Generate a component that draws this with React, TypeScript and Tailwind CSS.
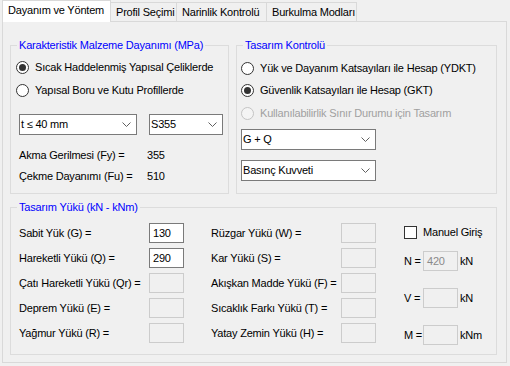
import React from 'react';

const Radio: React.FC<{ label: string; checked?: boolean; disabled?: boolean; className?: string }> = ({ label, checked, disabled, className = '' }) => (
  <div className={`flex items-center gap-[6px] h-[17px] ${className}`}>
    <span
      className={`w-[13px] h-[13px] rounded-full border flex items-center justify-center shrink-0 ${
        disabled ? 'border-[#c4c4c4] bg-[#f4f4f4]' : 'border-[#333333] bg-white'
      }`}
    >
      {checked && <span className="w-[7px] h-[7px] rounded-full bg-[#333333]" />}
    </span>
    <span className={disabled ? 'text-[#a0a0a0]' : ''}>{label}</span>
  </div>
);

const Chevron = () => (
  <svg width="9" height="5" viewBox="0 0 9 5" className="shrink-0">
    <polyline points="0.5,0.5 4.5,4.5 8.5,0.5" fill="none" stroke="#606060" strokeWidth="1" />
  </svg>
);

const Combo: React.FC<{ value: string; width: string; className?: string }> = ({ value, width, className = '' }) => (
  <div className={`h-[21px] ${width} bg-white border border-[#7a7a7a] flex items-center justify-between pl-[1px] pr-[5px] ${className}`}>
    <span>{value}</span>
    <Chevron />
  </div>
);

const TextBox: React.FC<{ value?: string; enabled?: boolean }> = ({ value = '', enabled }) => (
  <div
    className={`w-[35px] h-[20px] border flex items-center pl-[3px] shrink-0 ${
      enabled ? 'bg-white border-[#7a7a7a]' : 'bg-[#f0f0f0] border-[#cccccc] text-[#8a8a8a]'
    }`}
  >
    {value}
  </div>
);

const Group: React.FC<{ title: string; className?: string; children: React.ReactNode }> = ({ title, className = '', children }) => (
  <fieldset className={`border border-[#dcdcdc] ${className}`}>
    <legend className="ml-[6px] px-[2px] h-[13px] leading-[13px] text-[#0000ff]">{title}</legend>
    {children}
  </fieldset>
);

const LoadRow: React.FC<{ label: string; value?: string; enabled?: boolean }> = ({ label, value, enabled }) => (
  <div className="flex items-center h-[20px]">
    <span className="w-[130px]">{label}</span>
    <TextBox value={value} enabled={enabled} />
  </div>
);

const tabs = ['Profil Seçimi', 'Narinlik Kontrolü', 'Burkulma Modları'];
const tabWidths = ['w-[66px]', 'w-[90px]', 'w-[90px]'];

export default function App() {
  return (
    <div className="w-[510px] h-[366px] bg-[#f0f0f0] text-black text-[11px] leading-[13px] tracking-[-0.2px] font-['Liberation_Sans',Arial,sans-serif] overflow-hidden">
      {/* Tab headers */}
      <div className="h-[21px] flex items-end pl-[2px] relative z-10">
        <div className="w-[109px] h-[22px] -mb-px bg-white border border-b-0 border-[#d9d9d9] pl-[5px] pb-[2px] flex items-center">
          Dayanım ve Yöntem
        </div>
        {tabs.map((t, i) => (
          <div key={t} className={`${tabWidths[i]} h-[19px] border-t border-r border-[#d9d9d9] bg-[#f0f0f0] pl-[5px] flex items-center`}>
            {t}
          </div>
        ))}
      </div>

      {/* Tab page */}
      <div className="ml-[2px] w-[505px] h-[342px] border border-[#d9d9d9] bg-[#f0f0f0] pl-[7px] pt-[17px]">
        <div className="flex gap-[7px]">
          <Group title="Karakteristik Malzeme Dayanımı (MPa)" className="w-[219px] h-[155px]">
            <div className="flex flex-col pl-[5px]">
              <Radio label="Sıcak Haddelenmiş Yapısal Çeliklerde" checked className="mt-[7px]" />
              <Radio label="Yapısal Boru ve Kutu Profillerde" className="mt-[6px]" />
              <div className="flex gap-[12px] mt-[15px] pl-[3px]">
                <Combo value="t ≤ 40 mm" width="w-[118px]" />
                <Combo value="S355" width="w-[74px]" />
              </div>
              <div className="flex mt-[14px] pl-[3px]">
                <span className="w-[128px]">Akma Gerilmesi (Fy) =</span>
                <span>355</span>
              </div>
              <div className="flex mt-[8px] pl-[3px]">
                <span className="w-[128px]">Çekme Dayanımı (Fu) =</span>
                <span>510</span>
              </div>
            </div>
          </Group>

          <Group title="Tasarım Kontrolü" className="w-[261px] h-[155px]">
            <div className="flex flex-col pl-[4px]">
              <Radio label="Yük ve Dayanım Katsayıları ile Hesap (YDKT)" className="mt-[8px]" />
              <Radio label="Güvenlik Katsayıları ile Hesap (GKT)" checked className="mt-[5px]" />
              <Radio label="Kullanılabilirlik Sınır Durumu için Tasarım" disabled className="mt-[6px]" />
              <Combo value="G + Q" width="w-[135px]" className="mt-[7px]" />
              <Combo value="Basınç Kuvveti" width="w-[135px]" className="mt-[10px]" />
            </div>
          </Group>
        </div>

        <Group title="Tasarım Yükü (kN - kNm)" className="w-[487px] h-[154px] mt-[7px]">
          <div className="flex pl-[8px]">
            <div className="flex flex-col gap-[5px] mt-[9px]">
              <LoadRow label="Sabit Yük (G) =" value="130" enabled />
              <LoadRow label="Hareketli Yükü (Q) =" value="290" enabled />
              <LoadRow label="Çatı Hareketli Yükü (Qr) =" />
              <LoadRow label="Deprem Yükü (E) =" />
              <LoadRow label="Yağmur Yükü (R) =" />
            </div>
            <div className="flex flex-col gap-[5px] mt-[9px] ml-[27px]">
              <LoadRow label="Rüzgar Yükü (W) =" />
              <LoadRow label="Kar Yükü (S) =" />
              <LoadRow label="Akışkan Madde Yükü (F) =" />
              <LoadRow label="Sıcaklık Farkı Yükü (T) =" />
              <LoadRow label="Yatay Zemin Yükü (H) =" />
            </div>
            <div className="flex flex-col ml-[28px]">
              <div className="flex items-center gap-[6px] h-[13px] mt-[12px]">
                <span className="w-[13px] h-[13px] border border-[#333333] bg-white" />
                <span>Manuel Giriş</span>
              </div>
              {[
                { l: 'N =', v: '420', u: 'kN', mt: 'mt-[12px]' },
                { l: 'V =', v: '', u: 'kN', mt: 'mt-[17px]' },
                { l: 'M =', v: '', u: 'kNm', mt: 'mt-[17px]' },
              ].map((r) => (
                <div key={r.l} className={`flex items-center h-[20px] ${r.mt}`}>
                  <span className="w-[19px]">{r.l}</span>
                  <TextBox value={r.v} />
                  <span className="ml-[2px]">{r.u}</span>
                </div>
              ))}
            </div>
          </div>
        </Group>
      </div>
    </div>
  );
}
